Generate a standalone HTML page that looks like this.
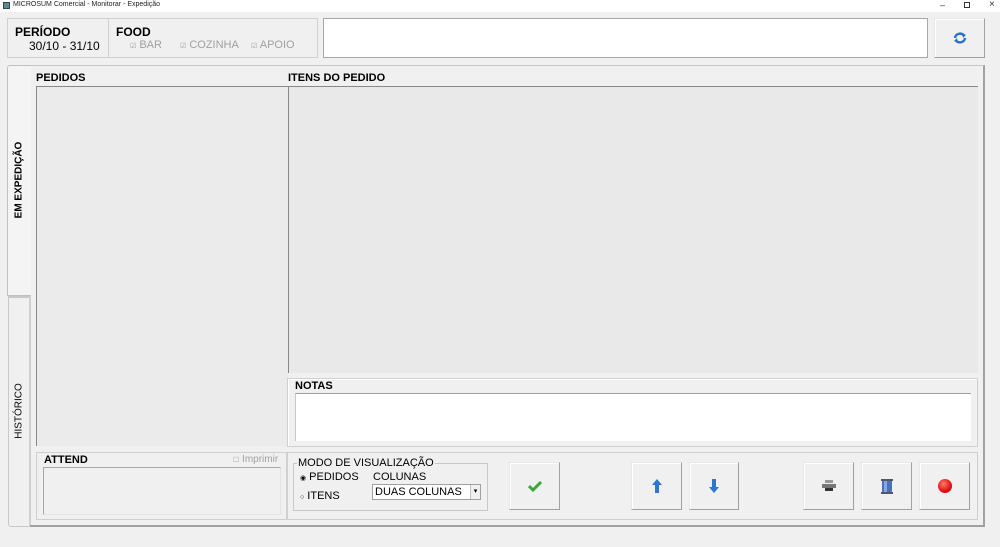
<!DOCTYPE html>
<html><head><meta charset="utf-8"><style>
*{margin:0;padding:0;box-sizing:border-box}
body{width:1000px;height:547px;background:#f0f0f0;font-family:"Liberation Sans",Arial,sans-serif;position:relative;overflow:hidden;color:#000}
.a{position:absolute}
.b{font-weight:bold;font-size:11px}
.t{font-size:11px}
.gray{color:#a0a0a0}
.btn{position:absolute;background:#f0f0f0;border:1px solid #e8e8e8;border-right:1px solid #a0a0a0;border-bottom:1px solid #a0a0a0;box-shadow:inset 1px 1px 0 #fff;display:flex;align-items:center;justify-content:center}
.sunk{border:1px solid #bcbcbc;border-right-color:#fff;border-bottom-color:#fff}
</style></head><body>
<!-- title bar -->
<div class="a" style="left:0;top:0;width:1000px;height:12px;background:#fff"></div>
<div class="a" style="left:3px;top:2px;width:7px;height:7px;background:#5a8a8a;border:1px solid #345"></div>
<div class="a" style="left:13px;top:1px;font-size:7px;color:#222">MICROSUM Comercial - Monitorar - Expedição</div>
<div class="a" style="left:940px;top:0px;font-size:9px;color:#333">–</div>
<div class="a" style="left:964px;top:2px;width:6px;height:6px;border:1px solid #333"></div>
<div class="a" style="left:989px;top:-1px;font-size:10px;color:#333">×</div>

<!-- top panel -->
<div class="a" style="left:7px;top:18px;width:311px;height:40px;border:1px solid #d0d0d0"></div>
<div class="a" style="left:108px;top:18px;width:1px;height:40px;background:#d0d0d0"></div>
<div class="a b" style="left:15px;top:25px;font-size:12px">PERÍODO</div>
<div class="a" style="left:29px;top:39px;font-size:12px">30/10 - 31/10</div>
<div class="a b" style="left:116px;top:25px;font-size:12px">FOOD</div>
<div class="a gray" style="left:130px;top:39px;font-size:11px"><span style="font-size:7px">☑</span> BAR</div>
<div class="a gray" style="left:180px;top:39px;font-size:11px"><span style="font-size:7px">☑</span> COZINHA</div>
<div class="a gray" style="left:251px;top:39px;font-size:11px"><span style="font-size:7px">☑</span> APOIO</div>
<div class="a" style="left:323px;top:18px;width:605px;height:40px;background:#fff;border:1px solid #a8a8a8"></div>
<div class="btn" style="left:934px;top:18px;width:51px;height:40px">
<svg width="14" height="12" viewBox="0 0 14 12"><path d="M2 6a5 4.5 0 0 1 9-2.5" fill="none" stroke="#2a70c8" stroke-width="2.4"/><path d="M9 1l4 2-3 3z" fill="#2a70c8"/><path d="M12 6a5 4.5 0 0 1-9 2.5" fill="none" stroke="#2a70c8" stroke-width="2.4"/><path d="M5 11l-4-2 3-3z" fill="#2a70c8"/></svg></div>

<!-- main tab control -->
<div class="a" style="left:7px;top:65px;width:24px;height:231px;border:1px solid #c0c0c0;border-right:none;border-radius:3px 0 0 0;background:#f4f4f4"></div>
<div class="a" style="left:8px;top:296px;width:22px;height:231px;border:1px solid #c8c8c8;border-top:2px solid #c8c8c8;border-radius:0 0 0 3px"></div>
<div class="a" style="left:29px;top:296px;width:2px;height:231px;background:#d0d0d0"></div>
<div class="a b" style="left:19px;top:180px;transform:translate(-50%,-50%) rotate(-90deg);white-space:nowrap;font-size:10px">EM EXPEDIÇÃO</div>
<div class="a" style="left:19px;top:411px;transform:translate(-50%,-50%) rotate(-90deg);white-space:nowrap;font-size:10px">HISTÓRICO</div>
<div class="a" style="left:30px;top:65px;width:955px;height:462px;border:1px solid #c8c8c8;border-left:none;border-right:2px solid #a0a0a0;border-bottom:2px solid #a0a0a0"></div>

<div class="a b" style="left:36px;top:72px">PEDIDOS</div>
<div class="a b" style="left:288px;top:72px">ITENS DO PEDIDO</div>
<div class="a" style="left:36px;top:86px;width:252px;height:360px;background:#ebebeb;border-left:1px solid #888;border-top:1px solid #888"></div>
<div class="a" style="left:288px;top:86px;width:690px;height:287px;background:#e9e9e9;border-left:1px solid #888;border-top:1px solid #888"></div>

<!-- notas -->
<div class="a" style="left:287px;top:378px;width:691px;height:69px;border:1px solid #d0d0d0;box-shadow:inset 1px 1px 0 #fff"></div>
<div class="a b" style="left:295px;top:380px">NOTAS</div>
<div class="a" style="left:295px;top:393px;width:676px;height:48px;background:#fff;border-top:1px solid #a0a0a0;border-left:1px solid #c8c8c8"></div>

<!-- attend -->
<div class="a" style="left:36px;top:452px;width:251px;height:68px;border:1px solid #d0d0d0"></div>
<div class="a b" style="left:44px;top:454px">ATTEND</div>
<div class="a gray" style="left:233px;top:454px;font-size:10px"><span style="font-size:7px">☐</span> Imprimir</div>
<div class="a" style="left:43px;top:467px;width:238px;height:48px;border:1px solid #a8a8a8;border-right-color:#e4e4e4;border-bottom-color:#e4e4e4"></div>

<!-- bottom panel -->
<div class="a" style="left:287px;top:452px;width:691px;height:68px;border:1px solid #d0d0d0"></div>
<div class="a" style="left:293px;top:463px;width:195px;height:48px;border:1px solid #c8c8c8"></div>
<div class="a t" style="left:297px;top:457px;background:#f0f0f0;padding:0 1px">MODO DE VISUALIZAÇÃO</div>
<div class="a t" style="left:300px;top:471px"><span style="font-size:7px">◉</span> PEDIDOS</div>
<div class="a t" style="left:300px;top:490px"><span style="font-size:7px">○</span> ITENS</div>
<div class="a t" style="left:373px;top:471px">COLUNAS</div>
<div class="a t" style="left:372px;top:484px;width:109px;height:16px;background:#fff;border:1px solid #a0a0a0;padding:1px 2px">DUAS COLUNAS</div>
<div class="a" style="left:470px;top:485px;width:10px;height:14px;border-left:1px solid #c0c0c0;background:#f0f0f0;font-size:7px;text-align:center;line-height:13px">▾</div>

<div class="btn" style="left:509px;top:462px;width:51px;height:48px"><svg width="14" height="11" viewBox="0 0 14 11"><path d="M1 5l4 4 8-8" fill="none" stroke="#3aa83a" stroke-width="3"/></svg></div>
<div class="btn" style="left:631px;top:462px;width:51px;height:48px"><svg width="10" height="14" viewBox="0 0 10 14"><path d="M5 0l5 6H7v8H3V6H0z" fill="#2a78d0"/></svg></div>
<div class="btn" style="left:689px;top:462px;width:50px;height:48px"><svg width="10" height="14" viewBox="0 0 10 14"><path d="M5 14l5-6H7V0H3v8H0z" fill="#2a78d0"/></svg></div>
<div class="btn" style="left:803px;top:462px;width:51px;height:48px"><svg width="14" height="12" viewBox="0 0 14 12"><rect x="3" y="0" width="8" height="3" fill="#999"/><rect x="0" y="4" width="14" height="4" fill="#777"/><rect x="3" y="8" width="8" height="3" fill="#333"/></svg></div>
<div class="btn" style="left:861px;top:462px;width:51px;height:48px"><svg width="14" height="15" viewBox="0 0 14 15"><rect x="2" y="1" width="10" height="13" rx="2" fill="#4a70c0"/><rect x="4" y="2" width="3" height="11" fill="#88a8e0"/><rect x="1" y="0" width="12" height="2" fill="#556"/><rect x="1" y="13" width="12" height="2" fill="#556"/></svg></div>
<div class="btn" style="left:919px;top:462px;width:51px;height:48px"><div style="width:14px;height:14px;border-radius:50%;background:radial-gradient(circle at 40% 35%,#ff7a6a,#e01010 60%,#b00)"></div></div>
</body></html>
